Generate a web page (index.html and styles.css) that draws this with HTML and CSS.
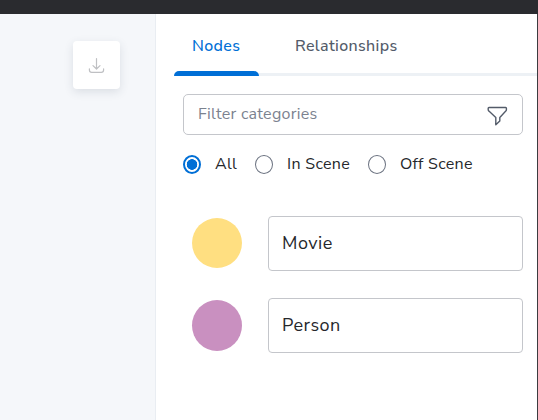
FILE: index.html
```
<!DOCTYPE html>
<html lang="en">
<head>
<meta charset="utf-8">
<title>Nodes</title>
<link rel="stylesheet" href="styles.css">
</head>
<body>
<div class="app">
  <header class="topbar"></header>
  <div class="body">
    <div class="canvas">
      <button class="download" aria-label="Download">
        <svg width="18" height="18" viewBox="0 0 18 18" fill="none" stroke="#bfc0c3" stroke-width="1.2" stroke-linecap="round" stroke-linejoin="round">
          <path d="M8.5 2.5V13M5 9.6L8.5 13L12 9.6M1.4 12.8V14.1Q1.4 16.4 3.7 16.4H13.3Q15.6 16.4 15.6 14.1V12.8"/>
        </svg>
      </button>
    </div>
    <aside class="panel">
      <nav class="tabs">
        <a class="tab active">Nodes</a>
        <a class="tab">Relationships</a>
      </nav>
      <div class="content">
        <div class="filter">
          <span class="placeholder">Filter categories</span>
          <svg width="22" height="22" viewBox="0 0 22 22" fill="none" stroke="#535b69" stroke-width="1.4" stroke-linejoin="round">
            <path d="M3 2.5H19.6Q20.4 2.5 20.4 3.3V4.7Q20.4 5.5 19.8 6.1L13.8 12.4V16L9.8 19.8V12.4L2.9 6.1Q2.2 5.5 2.2 4.7V3.3Q2.2 2.5 3 2.5Z"/>
          </svg>
        </div>
        <div class="radios">
          <label class="radio r-all"><i class="dot on"></i><span>All</span></label>
          <label class="radio r-in"><i class="dot"></i><span>In Scene</span></label>
          <label class="radio r-off"><i class="dot"></i><span>Off Scene</span></label>
        </div>
        <div class="rows">
          <div class="row"><i class="swatch movie"></i><div class="name">Movie</div></div>
          <div class="row"><i class="swatch person"></i><div class="name">Person</div></div>
        </div>
      </div>
    </aside>
  </div>
</div>
</body>
</html>
```
FILE: styles.css
```
* { box-sizing: border-box; }
body {
  margin: 0;
  font-family: "Nunito Sans", Nunito, "Open Sans", sans-serif;
  font-size: 16px;
  letter-spacing: .28px;
  color: #25272b;
}
.app { height: 420px; display: flex; flex-direction: column; overflow: hidden; background: #fff; }
.topbar { height: 14px; background: #2a2b2f; flex: none; }
.body { flex: 1; display: flex; }
.canvas { width: 155px; background: #f5f7fa; padding: 27px 0 0 73px; }
.download {
  width: 47px;
  height: 48px;
  padding: 0;
  border: 0;
  border-radius: 4px;
  background: #fff;
  box-shadow: 0 3px 10px rgba(50, 65, 85, .13);
  display: flex;
  align-items: center;
  justify-content: center;
}
.panel { flex: 1; border-left: 1px solid #e9edf2; border-right: 1px solid #3b3c40; }
.tabs { height: 62px; margin-left: 18px; display: flex; box-shadow: inset 0 -3px #edf1f5; }
.tab {
  height: 62px;
  padding: 21px 18px 0;
  line-height: 22px;
  font-weight: 550;
  letter-spacing: .36px;
  color: #535b69;
  white-space: nowrap;
}
.tab + .tab { padding-left: 36px; }
.active {
  width: 85px;
  color: #006fd6;
  position: relative;
}
.active::after {
  content: "";
  position: absolute;
  left: 0;
  right: 0;
  bottom: 0;
  height: 5px;
  border-radius: 5px 5px 0 0;
  background: #006fd6;
}
.content { padding: 18px 14px 0 27px; }
.filter {
  height: 41px;
  padding: 0 14px;
  border: 1px solid #c4c6cb;
  border-radius: 5px;
  display: flex;
  align-items: center;
  justify-content: space-between;
}
.filter svg { position: relative; top: 1px; }
.placeholder { color: #7b828f; line-height: 22px; margin-top: -2px; }
.radios { display: flex; margin-top: 19px; height: 20px; }
.radio { display: flex; align-items: center; line-height: 20px; white-space: nowrap; font-weight: 370; letter-spacing: .32px; }
.r-all { width: 72px; }
.r-in { width: 113px; }
.dot { width: 18px; height: 19px; border: 1px solid #6b7280; border-radius: 50%; margin-right: 14px; flex: none; }
.dot.on { border: 2px solid #006fd6; background: radial-gradient(circle, #006fd6 5px, #fff 5.6px); }
.rows { margin-top: 42px; display: grid; gap: 27px; }
.row { display: flex; align-items: center; height: 55px; padding-left: 9px; }
.swatch { width: 50px; height: 50px; border-radius: 50%; margin-right: 26px; flex: none; }
.movie { background: #ffdf81; margin-bottom: 1px; }
.person { background: #c990c0; height: 51px; }
.name {
  flex: 1;
  height: 55px;
  padding-left: 13px;
  border: 1px solid #c4c6cb;
  border-radius: 4px;
  font-size: 18px;
  font-weight: 370;
  letter-spacing: .5px;
  line-height: 53px;
}
```
